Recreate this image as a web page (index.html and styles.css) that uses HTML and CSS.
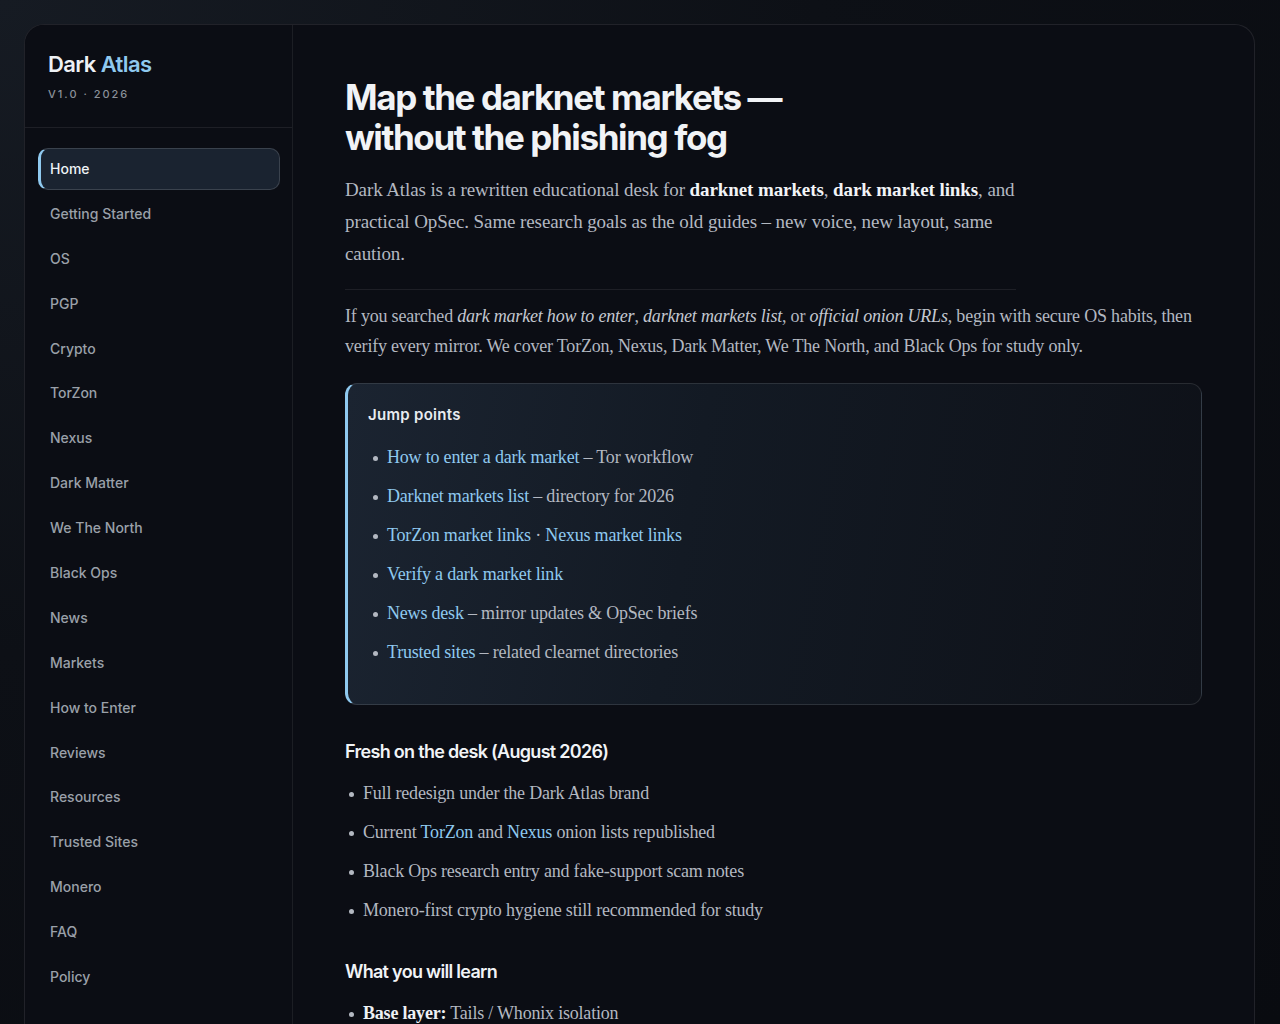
FILE: index.html
```html
<!DOCTYPE html>
<html lang="en">
<head>
<meta charset="utf-8">
<title>Dark Atlas — Map the darknet markets</title>
<link rel="stylesheet" href="styles.css">
</head>
<body>
<div class="shell">
  <aside class="sidebar">
    <div class="brand">
      <div class="brand-name">Dark <span class="accent">Atlas</span></div>
      <div class="brand-meta">V1.0 · 2026</div>
    </div>
    <nav class="nav">
      <a class="nav-item active" href="#">Home</a>
      <a class="nav-item" href="#">Getting Started</a>
      <a class="nav-item" href="#">OS</a>
      <a class="nav-item" href="#">PGP</a>
      <a class="nav-item" href="#">Crypto</a>
      <a class="nav-item" href="#">TorZon</a>
      <a class="nav-item" href="#">Nexus</a>
      <a class="nav-item" href="#">Dark Matter</a>
      <a class="nav-item" href="#">We The North</a>
      <a class="nav-item" href="#">Black Ops</a>
      <a class="nav-item" href="#">News</a>
      <a class="nav-item" href="#">Markets</a>
      <a class="nav-item" href="#">How to Enter</a>
      <a class="nav-item" href="#">Reviews</a>
      <a class="nav-item" href="#">Resources</a>
      <a class="nav-item" href="#">Trusted Sites</a>
      <a class="nav-item" href="#">Monero</a>
      <a class="nav-item" href="#">FAQ</a>
      <a class="nav-item" href="#">Policy</a>
    </nav>
  </aside>
  <main class="content">
    <h1 class="title">Map the darknet markets —<br>without the phishing fog</h1>
    <p class="lead">Dark Atlas is a rewritten educational desk for <strong>darknet markets</strong>, <strong>dark market links</strong>, and practical OpSec. Same research goals as the old guides – new voice, new layout, same caution.</p>
    <hr class="rule">
    <p class="intro">If you searched <em>dark market how to enter</em>, <em>darknet markets list</em>, or <em>official onion URLs</em>, begin with secure OS habits, then verify every mirror. We cover TorZon, Nexus, Dark Matter, We The North, and Black Ops for study only.</p>

    <section class="jump">
      <h2 class="jump-title">Jump points</h2>
      <ul class="list jump-list">
        <li><a href="#">How to enter a dark market</a> – Tor workflow</li>
        <li><a href="#">Darknet markets list</a> – directory for 2026</li>
        <li><a href="#">TorZon market links</a> · <a href="#">Nexus market links</a></li>
        <li><a href="#">Verify a dark market link</a></li>
        <li><a href="#">News desk</a> – mirror updates &amp; OpSec briefs</li>
        <li><a href="#">Trusted sites</a> – related clearnet directories</li>
      </ul>
    </section>

    <h3 class="section-title">Fresh on the desk (August 2026)</h3>
    <ul class="list">
      <li>Full redesign under the Dark Atlas brand</li>
      <li>Current <a href="#">TorZon</a> and <a href="#">Nexus</a> onion lists republished</li>
      <li>Black Ops research entry and fake-support scam notes</li>
      <li>Monero-first crypto hygiene still recommended for study</li>
    </ul>

    <h3 class="section-title after-list">What you will learn</h3>
    <ul class="list">
      <li><strong>Base layer:</strong> Tails / Whonix isolation</li>
      <li><strong>Keys:</strong> PGP signatures on every mirror</li>
    </ul>
  </main>
</div>
</body>
</html>
```

FILE: styles.css
```css
* { box-sizing: border-box; }

html, body { height: 100%; }

body {
  margin: 0;
  padding: 24px 25px 0 24px;
  background: radial-gradient(ellipse at 0% 0%, #161b23 0%, #0d1016 45%, #090b10 100%);
  color: #b7bcc6;
  font-family: "Liberation Serif", "Times New Roman", serif;
  overflow: hidden;
}

a { color: #8fc9ef; text-decoration: none; }

.shell {
  display: flex;
  min-height: 1100px;
  border: 1px solid rgba(255, 255, 255, 0.09);
  border-radius: 20px;
  background: #0b0d14;
  overflow: hidden;
}

/* ---------- sidebar ---------- */
.sidebar {
  flex: 0 0 268px;
  border-right: 1px solid rgba(255, 255, 255, 0.07);
  background: #0b0d14;
  font-family: Inter, "Noto Sans", sans-serif;
}

.brand {
  height: 103px;
  padding: 25px 22px 0 23px;
  border-bottom: 1px solid rgba(255, 255, 255, 0.08);
}

.brand-name {
  font-size: 22px;
  font-weight: 600;
  letter-spacing: -0.6px;
  color: #eef1f5;
  line-height: 28px;
}

.brand-name .accent { color: #8fc9ef; }

.brand-meta {
  margin-top: 9px;
  font-size: 11px;
  letter-spacing: 2px;
  color: #8a9099;
  font-weight: 500;
}

.nav {
  display: flex;
  flex-direction: column;
  gap: 2.9px;
  padding: 20px 12px 0 13px;
}

.nav-item {
  display: block;
  height: 42px;
  line-height: 40px;
  padding-left: 9px;
  font-size: 14px;
  font-weight: 500;
  color: #9aa0a9;
  border-radius: 10px;
  border: 1px solid transparent;
  border-left-width: 3px;
}

.nav-item.active {
  color: #eef2f6;
  background: #1a2330;
  border-color: rgba(255, 255, 255, 0.14);
  border-left-color: #8fc9ef;
}

/* ---------- main ---------- */
.content {
  flex: 1;
  padding: 52px 52px 0 52px;
}

.title {
  margin: 0;
  font-family: Inter, "Noto Sans", sans-serif;
  font-size: 35px;
  line-height: 40px;
  font-weight: 700;
  letter-spacing: -1.4px;
  color: #f1f3f6;
}

.lead {
  margin: 17px 0 0;
  max-width: 682px;
  font-size: 19px;
  line-height: 32px;
  color: #b3b8c1;
  letter-spacing: -0.1px;
}

.lead strong { color: #f2f4f7; }

.rule {
  margin: 19px 0 0;
  max-width: 671px;
  border: 0;
  border-top: 1px solid rgba(255, 255, 255, 0.08);
}

.intro {
  margin: 11px 0 0;
  font-size: 18px;
  line-height: 30px;
  color: #b3b8c1;
  letter-spacing: -0.2px;
}

.intro em { color: #c4c8d0; }

.jump {
  margin-top: 22px;
  padding: 22px 20px 32px;
  border: 1px solid rgba(255, 255, 255, 0.11);
  border-left: 3px solid #8fc9ef;
  border-radius: 12px;
  background: linear-gradient(100deg, #1b2431 0%, #131a24 40%, #0e1118 100%);
}

.jump-title {
  margin: 0;
  font-family: Inter, "Noto Sans", sans-serif;
  font-size: 15px;
  font-weight: 600;
  letter-spacing: 0.3px;
  color: #e8ecf1;
  line-height: 18px;
}

.list {
  margin: 0;
  padding: 0;
  list-style: none;
  font-size: 18px;
  line-height: 39px;
  color: #b3b8c1;
  letter-spacing: -0.2px;
}

.list li {
  position: relative;
  padding-left: 18px;
}

.list li::before {
  content: "";
  position: absolute;
  left: 4px;
  top: 18px;
  width: 5px;
  height: 5px;
  border-radius: 50%;
  background: #b3b8c1;
}

.list strong { color: #eef1f5; }

.jump-list {
  margin-top: 14px;
  padding-left: 1px;
}

.section-title {
  margin: 34px 0 9px;
  font-family: Inter, "Noto Sans", sans-serif;
  font-size: 18px;
  font-weight: 600;
  letter-spacing: -0.7px;
  color: #f1f3f6;
  line-height: 26px;
}

.section-title.after-list { margin-top: 29px; }
```
